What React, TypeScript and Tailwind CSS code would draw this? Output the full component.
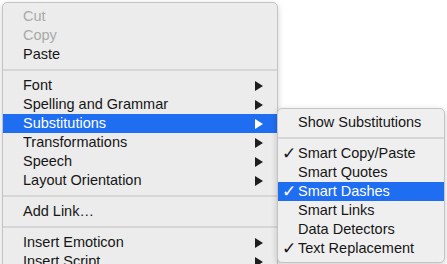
import React from 'react';

type Item =
  | { kind: 'sep' }
  | { kind: 'item'; label: string; disabled?: boolean; submenu?: boolean; active?: boolean; checked?: boolean };

const mainItems: Item[] = [
  { kind: 'item', label: 'Cut', disabled: true },
  { kind: 'item', label: 'Copy', disabled: true },
  { kind: 'item', label: 'Paste' },
  { kind: 'sep' },
  { kind: 'item', label: 'Font', submenu: true },
  { kind: 'item', label: 'Spelling and Grammar', submenu: true },
  { kind: 'item', label: 'Substitutions', submenu: true, active: true },
  { kind: 'item', label: 'Transformations', submenu: true },
  { kind: 'item', label: 'Speech', submenu: true },
  { kind: 'item', label: 'Layout Orientation', submenu: true },
  { kind: 'sep' },
  { kind: 'item', label: 'Add Link…' },
  { kind: 'sep' },
  { kind: 'item', label: 'Insert Emoticon', submenu: true },
  { kind: 'item', label: 'Insert Script', submenu: true },
];

const subItems: Item[] = [
  { kind: 'item', label: 'Show Substitutions' },
  { kind: 'sep' },
  { kind: 'item', label: 'Smart Copy/Paste', checked: true },
  { kind: 'item', label: 'Smart Quotes' },
  { kind: 'item', label: 'Smart Dashes', checked: true, active: true },
  { kind: 'item', label: 'Smart Links' },
  { kind: 'item', label: 'Data Detectors' },
  { kind: 'item', label: 'Text Replacement', checked: true },
];

const Arrow: React.FC<{ light?: boolean }> = ({ light }) => (
  <svg width="8" height="10" viewBox="0 0 8 10" className="absolute right-[14px] top-[5px]">
    <polygon points="0,0 8,5 0,10" fill={light ? '#ffffff' : '#1e1e1e'} />
  </svg>
);

const MenuRows: React.FC<{ items: Item[] }> = ({ items }) => (
  <>
    {items.map((it, i) => {
      if (it.kind === 'sep') {
        return (
          <div key={i} className="h-[12px] flex items-center">
            <div className="h-[2px] w-full bg-[#d6d6d6]" />
          </div>
        );
      }
      const color = it.active ? 'text-white' : it.disabled ? 'text-[#a9a9a9]' : 'text-[#161616]';
      return (
        <div
          key={i}
          className={`relative h-[19px] pl-[20px] flex items-center leading-none whitespace-nowrap ${color} ${
            it.active ? 'bg-[#1f6ef2]' : ''
          }`}
        >
          {it.checked && (
            <span
              className="absolute left-[4px] top-[1px] text-[17px] font-bold leading-none"
              style={{ fontFamily: '"DejaVu Sans", sans-serif' }}
            >
              ✓
            </span>
          )}
          {it.label}
          {it.submenu && <Arrow light={it.active} />}
        </div>
      );
    })}
  </>
);

export default function App() {
  return (
    <div
      className="relative w-[447px] h-[264px] bg-white overflow-hidden text-[14.5px]"
      style={{ fontFamily: '"Liberation Sans", Arial, sans-serif' }}
    >
      {/* Main context menu */}
      <div className="ml-[2px] mt-[2px] w-[276px] pt-[4px] pb-[6px] rounded-[5px] bg-[#ececec] border border-[#c4c4c4] shadow-[0_2px_6px_rgba(0,0,0,0.18)]">
        <MenuRows items={mainItems} />
      </div>

      {/* Substitutions submenu */}
      <div className="absolute left-[277px] top-[108px] w-[168px] pt-[4px] pb-[4px] rounded-[5px] bg-[#efefef] border border-[#c4c4c4] shadow-[0_2px_6px_rgba(0,0,0,0.2)]">
        <MenuRows items={subItems} />
      </div>
    </div>
  );
}
